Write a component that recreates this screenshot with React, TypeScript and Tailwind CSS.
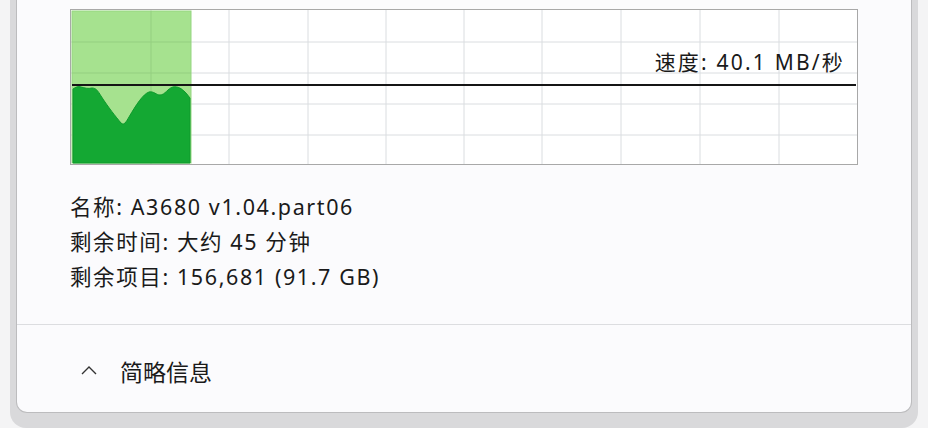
import React from "react";

const font = { fontFamily: '"Noto Sans", "Noto Sans CJK SC", sans-serif' };

function Chart() {
  const vx = [81, 159, 238, 316, 394, 472, 551, 630, 709];
  const hy = [33, 64, 95, 126];
  return (
    <svg width="789" height="157" viewBox="0 0 789 157" className="block">
      <rect x="0.5" y="0.5" width="787" height="155" fill="#ffffff" stroke="#a8a8a8" />
      {vx.map((x) => (
        <line key={x} x1={x} y1="1" x2={x} y2="155" stroke="#dadde0" strokeWidth="1" />
      ))}
      {hy.map((y) => (
        <line key={y} x1="1" y1={y} x2="787" y2={y} stroke="#dadde0" strokeWidth="1" />
      ))}
      <rect x="2" y="2" width="119" height="152" fill="#a6e28f" stroke="#95d680" strokeWidth="1" />
      <line x1="81" y1="2" x2="81" y2="154" stroke="#94cf80" strokeWidth="1" />
      <line x1="2" y1="33" x2="121" y2="33" stroke="#94cf80" strokeWidth="1" />
      <line x1="2" y1="64" x2="121" y2="64" stroke="#94cf80" strokeWidth="1" />
      <path
        d="M3 80 C6 78 8 77 11 78 C15 79 18 80 22 79 C26 79 28 82 31 87 C38 98 46 108 51 114 C54 117 56 113 59 108 C66 96 73 85 79 83 C84 82 86 86 90 86 C95 86 98 79 103 78 C108 77 112 80 115 83 C118 86 119 88 120 89 L120 154 L3 154 Z"
        fill="#14a833"
        stroke="#0e9a2c"
        strokeWidth="1"
      />
      <line x1="2" y1="76" x2="786" y2="76" stroke="#151515" strokeWidth="2" />
    </svg>
  );
}

export default function App() {
  return (
    <div className="w-[928px] h-[428px] bg-[#f4f4f5] px-[10px] overflow-hidden" style={font}>
      <div className="h-[428px] bg-[#d9d9db] px-[6px] pb-[15px] rounded-b-[16px]">
        <div className="h-[413px] bg-[#fbfbfd] border-x border-b border-[#bcbcbe] rounded-b-[11px] flex flex-col">
          <div className="pl-[53px] pt-[9px] relative">
            <Chart />
            <div className="absolute right-[66px] top-[48px] text-[21px] leading-[28px] tracking-[2.2px] text-[#1a1a1a]">
              速度: 40.1 MB/秒
            </div>
          </div>
          <div className="pl-[53px] pt-[23px] flex flex-col text-[21.5px] leading-[35px] tracking-[1.6px] text-[#1a1a1a]">
            <div>名称: A3680 v1.04.part06</div>
            <div>剩余时间: 大约 45 分钟</div>
            <div>剩余项目: 156,681 (91.7 GB)</div>
          </div>
          <div className="mt-[30px] border-t border-[#dcdde0]" />
          <div className="flex items-center pl-[63px] pt-[32px] text-[#1a1a1a]">
            <svg width="18" height="12" viewBox="0 0 18 12" className="mt-[-4px]">
              <path d="M2 10 L9 3 L16 10" fill="none" stroke="#333" strokeWidth="1.4" />
            </svg>
            <span className="ml-[22px] text-[23px] leading-[30px]">简略信息</span>
          </div>
        </div>
      </div>
    </div>
  );
}
